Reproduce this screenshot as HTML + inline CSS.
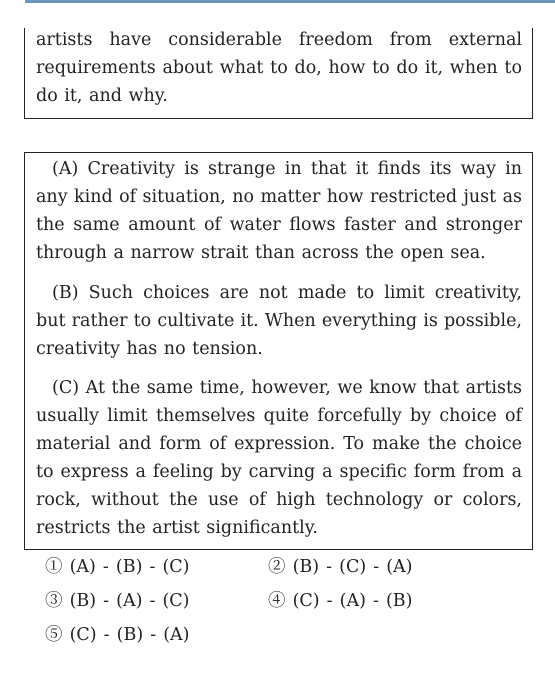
<!DOCTYPE html>
<html><head><meta charset="utf-8"><style>
html,body{margin:0;padding:0;background:#fff;width:555px;height:674px;overflow:hidden;position:relative}
body{font-family:"DejaVu Serif","Noto Serif CJK SC",serif;font-size:17.5px;color:#222}
.bar{position:absolute;left:25px;top:0;width:530px;height:3px;background:#6d95bb}
.box{position:absolute;left:24px;width:507px;border:1px solid #222}
.l{position:absolute;left:11px;width:486px;height:28px;line-height:30px;white-space:nowrap;text-align:justify;text-align-last:justify}
.l.e{text-align-last:left;word-spacing:1px}
.l.i{left:27px;width:470px}
.o{position:absolute;line-height:30px;white-space:nowrap;word-spacing:1.5px}
</style></head><body>
<div class="bar"></div>
<div class="box" style="top:28px;height:90px;border-top:none">
<div class="l" style="top:-3px">artists have considerable freedom from external</div>
<div class="l" style="top:25px">requirements about what to do, how to do it, when to</div>
<div class="l e" style="top:53px">do it, and why.</div>
</div>
<div class="box" style="top:152px;height:396px">
<div class="l i" style="top:1px">(A) Creativity is strange in that it finds its way in</div>
<div class="l" style="top:29px">any kind of situation, no matter how restricted just as</div>
<div class="l" style="top:57px">the same amount of water flows faster and stronger</div>
<div class="l e" style="top:85px">through a narrow strait than across the open sea.</div>
<div class="l i" style="top:125px">(B) Such choices are not made to limit creativity,</div>
<div class="l" style="top:153px">but rather to cultivate it. When everything is possible,</div>
<div class="l e" style="top:181px">creativity has no tension.</div>
<div class="l i" style="top:220px">(C) At the same time, however, we know that artists</div>
<div class="l" style="top:248px">usually limit themselves quite forcefully by choice of</div>
<div class="l" style="top:276px">material and form of expression. To make the choice</div>
<div class="l" style="top:304px">to express a feeling by carving a specific form from a</div>
<div class="l" style="top:332px">rock, without the use of high technology or colors,</div>
<div class="l e" style="top:360px">restricts the artist significantly.</div>
</div>
<div class="o" style="left:45px;top:552px">① (A) - (B) - (C)</div>
<div class="o" style="left:268px;top:552px">② (B) - (C) - (A)</div>
<div class="o" style="left:45px;top:586px">③ (B) - (A) - (C)</div>
<div class="o" style="left:268px;top:586px">④ (C) - (A) - (B)</div>
<div class="o" style="left:45px;top:620px">⑤ (C) - (B) - (A)</div>
</body></html>
